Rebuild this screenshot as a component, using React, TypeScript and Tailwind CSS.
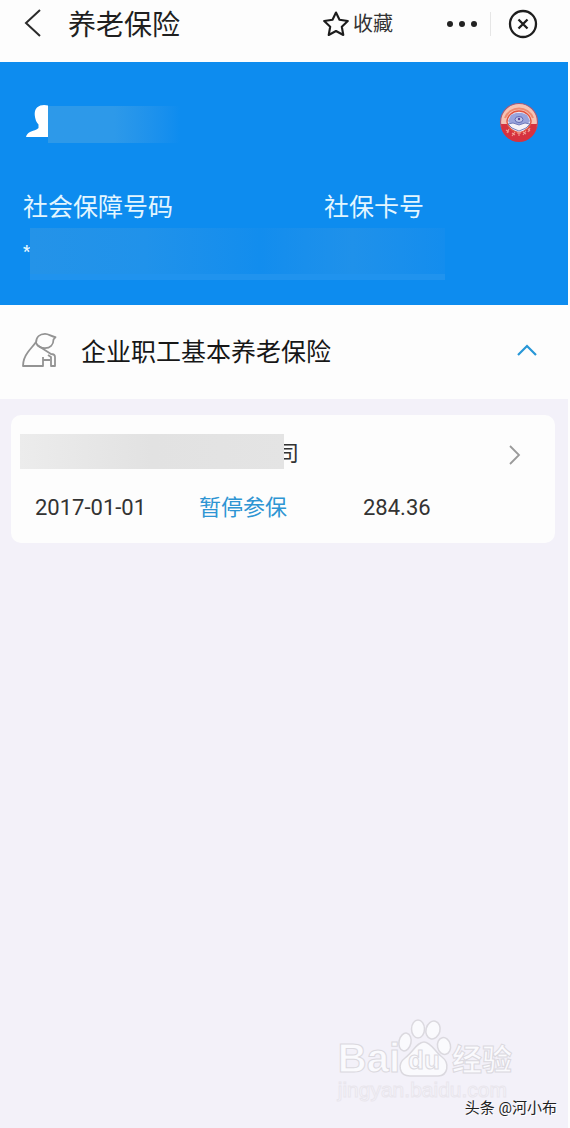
import type { ReactNode } from "react";

const record = {
  start: "2017-01-01",
  status: "暂停参保",
  amount: "284.36",
};

function BackIcon() {
  return (
    <svg viewBox="0 0 18 28" className="h-7 w-[18px]" fill="none" stroke="#2b2b2b" strokeWidth="2">
      <path d="M16 1 2 14 16 27" />
    </svg>
  );
}

function StarIcon() {
  return (
    <svg viewBox="0 0 26 26" className="size-[26px]" fill="none" stroke="#1c1c1c" strokeWidth="2.1" strokeLinejoin="round">
      <path d="m13 1.500 3.500 7.300 8.300 1.200-6 5.700 1.500 8.300L13 20l-7.300 4 1.500-8.300-6-5.700 8.300-1.200z" />
    </svg>
  );
}

function CloseIcon() {
  return (
    <svg viewBox="0 0 30 30" className="size-[30px]" fill="none" stroke="#1e1e1e" strokeWidth="2.3">
      <circle cx="15" cy="15" r="13" />
      <path d="m10.500 10.500 9 9m0-9-9 9" />
    </svg>
  );
}

function PersonIcon() {
  return (
    <svg viewBox="0 0 22 34" className="h-[34px] w-[22px]" fill="#fff">
      <path d="M22 1.500C19 .5 14 .5 11 3.500 8 6.500 8.500 11 9.500 15c.5 2.500 1.500 3.500 3 5.500V24C11 26 7 26.500 4 28c-2.500 1.200-3.500 3-4 5h22z" />
    </svg>
  );
}

function Emblem() {
  return (
    <svg viewBox="0 0 40 40" className="size-10">
      <circle cx="20" cy="20" r="18.5" fill="#f6c3b4" stroke="#a65a78" strokeWidth="1.2" />
      <path d="M2 22h36a18 18 0 0 1-36 0z" fill="#d6323f" />
      <path d="M6 16a15 15 0 0 1 28 0" fill="none" stroke="#ee8a72" strokeWidth="2" />
      <path d="M8 20a12 11 0 0 1 24 0q-1 8-12 11Q9 28 8 20z" fill="#e9e4f2" stroke="#e2543f" strokeWidth="1.4" />
      <path d="m9 19 3-6 5-2h6l5 2 3 6-4 5-7 3-7-3z" fill="#99a3dc" />
      <path d="m9 22 5-1 6 2 6-2 5 1-4 4-7 3-7-3z" fill="#f5f1f8" stroke="#5c67ad" strokeWidth=".8" />
      <ellipse cx="20" cy="17.500" rx="4" ry="3" fill="#c3c8ea" stroke="#6069b4" />
      <circle cx="20" cy="17" r="1.200" fill="#553f99" />
      <path d="m7 28 3 2m0-3-2 4m5 0 3 2m0-3-3 4m5-3h4m-2-2v5m4-4 3 2m0-3-3 4m5-6 2 2m0-3-2 4" stroke="#f29c92" strokeWidth="1.1" />
    </svg>
  );
}

function ElderIcon() {
  return (
    <svg viewBox="0 0 36 38" className="h-[38px] w-9" fill="none" stroke="#939393" strokeWidth="1.8" strokeLinejoin="round">
      <path d="M14 10C14 4 18 .9 23 .9c4 0 6 2.600 10.500 3.200l-2 2.400C31.500 12 28 15.200 23 15.200c-4 0-7-1.700-9-5.200z" />
      <path d="M14 9c-2 3-5 6-8 10-3 4-5 9-5 14h20V24" />
      <path d="m15 12 14 9c3 0 4 1 4 3v9h-4v-9l-3-2M21 27h7" />
    </svg>
  );
}

function Paw() {
  return (
    <svg viewBox="0 0 56 60" className="h-[60px] w-14" fill="#fafafd" stroke="#dbd9df" strokeWidth="1.5">
      <ellipse cx="9" cy="24" rx="6" ry="9" transform="rotate(12 9 24)" />
      <ellipse cx="22" cy="11" rx="6.500" ry="9" />
      <ellipse cx="37" cy="12" rx="7" ry="9" transform="rotate(15 37 12)" />
      <ellipse cx="48" cy="28" rx="6.500" ry="8.500" transform="rotate(-12 48 28)" />
      <path d="M28 24c7 0 11 10 18 15 8 6 6 19-4 19H14C3 58 1 46 9 40c8-6 12-16 19-16z" />
    </svg>
  );
}

function Label({ children }: { children: ReactNode }) {
  return <dt className="text-[25px] leading-10 text-[#e3f6ff]">{children}</dt>;
}

function TopBar() {
  return (
    <header className="flex h-[62px] items-start bg-[#fdfdfd] pt-2 pr-[30px] pl-6">
      <button type="button" aria-label="返回" className="mt-px">
        <BackIcon />
      </button>
      <h1 className="ml-[26px] text-[28px] leading-9 text-[#1f1f1f]">养老保险</h1>
      <div className="ml-auto flex h-8 items-center">
        <button type="button" className="flex items-center gap-1 text-xl leading-8 text-[#333]">
          <StarIcon />
          收藏
        </button>
        <button type="button" aria-label="更多" className="ml-[54px] flex gap-[6px]">
          <span className="size-[6px] rounded-full bg-[#222]" />
          <span className="size-[6px] rounded-full bg-[#222]" />
          <span className="size-[6px] rounded-full bg-[#222]" />
        </button>
        <span className="mr-[17px] ml-[13px] h-6 w-px bg-[#e6e6e6]" />
        <button type="button" aria-label="关闭">
          <CloseIcon />
        </button>
      </div>
    </header>
  );
}

function Profile() {
  return (
    <section className="h-[243px] bg-[#0d8cef] pt-10">
      <div className="flex items-start pr-[29px] pl-[26px]">
        <div className="mt-[2px]">
          <PersonIcon />
        </div>
        <div className="mt-1 h-[37px] w-[132px] bg-linear-to-r from-[#2d99e9] via-[#2d99e9] to-[#0d8cef]" />
        <div className="ml-auto">
          <Emblem />
        </div>
      </div>
      <dl className="mt-[45px] grid grid-cols-[301px_1fr] pl-[23px]">
        <Label>社会保障号码</Label>
        <Label>社保卡号</Label>
      </dl>
      <div className="flex pl-[23px] text-[#e3f6ff]">
        <span className="w-[7px] overflow-hidden pt-3 text-base font-bold">*</span>
        <div className="flex h-[52px] w-[415px] border-b-[6px] border-[#2093ee]">
          <div className="w-[230px] bg-linear-to-r from-[#2493e8] via-[#2092ea] to-[#128dee]" />
          <div className="flex-1 bg-linear-to-r from-[#128dee] via-[#1f91ea] to-[#138dee]" />
        </div>
      </div>
    </section>
  );
}

function InsuranceRow() {
  return (
    <button type="button" className="flex h-[94px] w-full items-start bg-[#fdfdfd] pt-7 pr-[31px] pl-[22px]">
      <ElderIcon />
      <span className="ml-[23px] text-[25px] leading-10 text-[#171717]">企业职工基本养老保险</span>
      <svg viewBox="0 0 20 12" className="mt-[11px] ml-auto h-3 w-5" fill="none" stroke="#2897d7" strokeWidth="2.2">
        <path d="m1 11 9-9 9 9" />
      </svg>
    </button>
  );
}

function RecordCard() {
  return (
    <a href="#record" className="mx-[11px] mt-4 mr-[13px] block h-32 rounded-[10px] bg-[#fdfdfd] pt-[19px] text-[22px] text-[#333]">
      <div className="flex items-start pr-[34px] pl-[9px]">
        <div className="relative z-10 h-[35px] w-[264px] bg-linear-to-r from-[#ececec] via-[#e2e2e2] to-[#e4e4e4]" />
        <span className="-ml-[7px] leading-10">司</span>
        <svg viewBox="0 0 12 20" className="mt-[11px] ml-auto h-5 w-3" fill="none" stroke="#9a9a9a" strokeWidth="1.8">
          <path d="m1 1 9 9-9 9" />
        </svg>
      </div>
      <div className="mt-4 grid grid-cols-[164px_164px_1fr] pl-6 leading-9">
        <span>{record.start}</span>
        <span className="text-[#2e95d3]">{record.status}</span>
        <span>{record.amount}</span>
      </div>
    </a>
  );
}

function Watermark() {
  return (
    <footer className="mt-auto flex flex-col items-end pr-[11px] pb-[10px]">
      <div className="mr-[45px] flex flex-col">
        <div className="flex items-end font-bold text-[#fafafd] [-webkit-text-stroke:1px_#dbd9df]">
          <span className="font-['Liberation_Sans'] text-[40px] leading-10">Bai</span>
          <div className="relative -ml-1">
            <Paw />
            <span className="absolute inset-x-0 bottom-1 text-center font-['Liberation_Sans'] text-[26px] leading-7">du</span>
          </div>
          <span className="text-[30px] leading-9">经验</span>
        </div>
        <span className="font-['Liberation_Sans'] text-[21px] leading-6 text-[#f7f6fb] [-webkit-text-stroke:1px_#e9e6ed]">
          jingyan.baidu.com
        </span>
      </div>
      <span className="-mt-1 text-[15px] leading-5 text-[#222] [text-shadow:1px_1px_0_#fff]">头条 @河小布</span>
    </footer>
  );
}

export default function App() {
  return (
    <div className="min-h-screen bg-[#fdfdfd] pr-[2px] font-[Roboto,'Noto_Sans_CJK_SC',sans-serif]">
      <main className="flex min-h-screen flex-col bg-[#f3f1f9]">
        <TopBar />
        <Profile />
        <InsuranceRow />
        <RecordCard />
        <Watermark />
      </main>
    </div>
  );
}
